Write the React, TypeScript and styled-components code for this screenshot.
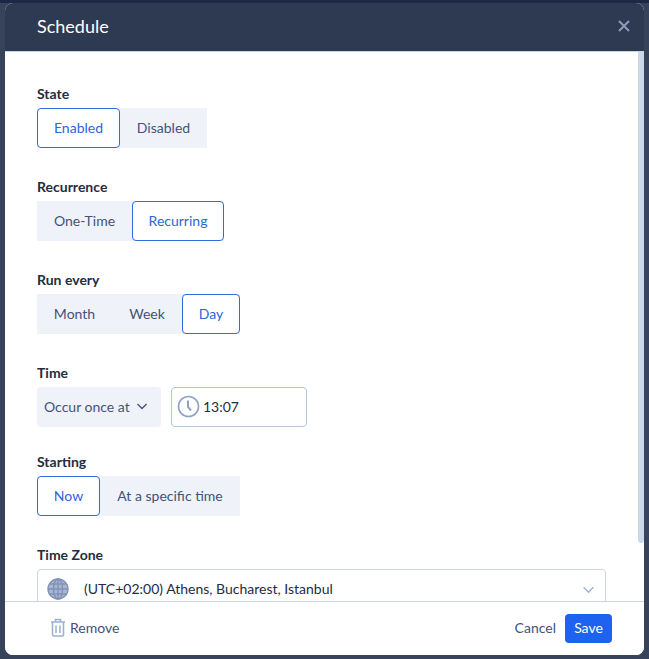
import styled, { createGlobalStyle } from "styled-components";

const GlobalStyle = createGlobalStyle`
  html, body {
    margin: 0;
    padding: 0;
    height: 100%;
    overflow: hidden;
    background: #37435b;
    font-family: "Lato", "Liberation Sans", sans-serif;
  }
`;

const Backdrop = styled.div`
  width: 649px;
  height: 659px;
  padding: 3px 5px 4px;
  box-sizing: border-box;
  background: linear-gradient(#1c2845 0, #1c2845 3px, #37435b 3px);
`;

const Dialog = styled.div`
  display: flex;
  flex-direction: column;
  height: 652px;
  border-radius: 8px;
  overflow: hidden;
  background: #fff;
`;

const Header = styled.header`
  flex: none;
  height: 49px;
  display: flex;
  align-items: center;
  justify-content: space-between;
  padding: 0 13px 2px 32px;
  box-sizing: border-box;
  background: #2d3a52;
  border-bottom: 1px solid #c9d6ea;
`;

const Title = styled.h1`
  margin: 0;
  font-size: 18px;
  font-weight: 400;
  color: #fff;
`;

const CloseButton = styled.button`
  display: flex;
  padding: 0;
  border: 0;
  background: none;
`;

const Body = styled.div`
  position: relative;
  flex: 1;
  min-height: 0;
  overflow: hidden;
  padding: 32px 32px 0;
`;

const ScrollThumb = styled.div`
  position: absolute;
  top: 0;
  right: 0;
  width: 6px;
  height: 491px;
  border-radius: 0 0 3px 3px;
  background: #ccd8ea;
`;

const Field = styled.div<{ $gap?: number }>`
  margin-bottom: ${(p) => p.$gap ?? 29}px;
`;

const Label = styled.div`
  height: 19px;
  margin-bottom: 5px;
  line-height: 19px;
  font-size: 14px;
  font-weight: 700;
  color: #242d40;
`;

const Segments = styled.div`
  display: inline-flex;
  vertical-align: top;
  height: 40px;
  background: #eff2f8;
`;

const Segment = styled.button<{ $active?: boolean; $width: number }>`
  width: ${(p) => p.$width}px;
  height: 40px;
  padding: 0 0 2px;
  box-sizing: border-box;
  border: 1px solid ${(p) => (p.$active ? "#2f6ade" : "transparent")};
  border-radius: ${(p) => (p.$active ? "4px" : "0")};
  background: ${(p) => (p.$active ? "#fff" : "transparent")};
  color: ${(p) => (p.$active ? "#2b66d9" : "#43527a")};
  font-family: inherit;
  font-size: 14px;
`;

const Row = styled.div`
  display: flex;
  gap: 10px;
`;

const SelectButton = styled.button`
  display: flex;
  align-items: center;
  gap: 6px;
  width: 124px;
  height: 40px;
  padding: 0 0 2px 7px;
  box-sizing: border-box;
  border: 0;
  border-radius: 4px;
  background: #eff2f8;
  color: #43527a;
  font-family: inherit;
  font-size: 14px;
`;

const TimeInput = styled.div`
  display: flex;
  align-items: center;
  gap: 3px;
  width: 136px;
  height: 40px;
  padding: 0 0 2px 5px;
  box-sizing: border-box;
  border: 1px solid #b6c4de;
  border-radius: 4px;
  color: #242d40;
  font-size: 14px;
`;

const ZoneSelect = styled.div`
  display: flex;
  align-items: center;
  width: 569px;
  height: 40px;
  padding: 0 10px 0 9px;
  box-sizing: border-box;
  border: 1px solid #c9d6ea;
  border-radius: 4px;
  color: #242d40;
  font-size: 14px;
`;

const ZoneText = styled.span`
  flex: 1;
  margin-left: 15px;
  padding-bottom: 2px;
`;

const Footer = styled.footer`
  flex: none;
  height: 54px;
  display: flex;
  align-items: center;
  justify-content: space-between;
  padding: 0 32px 0 45px;
  box-sizing: border-box;
  background: #fff;
  border-top: 1px solid #c9d6ea;
`;

const RemoveButton = styled.button`
  display: flex;
  align-items: center;
  gap: 4px;
  padding: 0 0 2px;
  border: 0;
  background: none;
  color: #43527a;
  font-family: inherit;
  font-size: 14px;
`;

const Actions = styled.div`
  display: flex;
  align-items: center;
  gap: 9px;
`;

const CancelButton = styled.button`
  padding: 0 0 2px;
  border: 0;
  background: none;
  color: #43527a;
  font-family: inherit;
  font-size: 14px;
`;

const SaveButton = styled.button`
  width: 47px;
  height: 29px;
  padding: 0 0 2px;
  border: 0;
  border-radius: 4px;
  background: #1e62f0;
  color: #fff;
  font-family: inherit;
  font-size: 14px;
`;

const CloseIcon = () => (
  <svg width="14" height="14" viewBox="0 0 14 14" fill="none" stroke="#8d9ab8" strokeWidth="2">
    <path d="M2 2l10 10M12 2L2 12" />
  </svg>
);

const Chevron = ({ color, size }: { color: string; size: number }) => (
  <svg width={size} height={size} viewBox="0 0 12 12" fill="none" stroke={color} strokeWidth="1.3">
    <path d="M1.5 4l4.5 4.5L10.5 4" />
  </svg>
);

const ClockIcon = () => (
  <svg width="23" height="23" viewBox="0 0 23 23" fill="none" stroke="#8fa2c6" strokeWidth="1.6">
    <circle cx="11.5" cy="11.5" r="10" />
    <path d="M11 5.5v6.5l3 3.5" strokeWidth="2" />
  </svg>
);

const GlobeIcon = () => (
  <svg width="22" height="22" viewBox="0 0 22 22" fill="none" stroke="#8192b6" strokeWidth="1.4">
    <circle cx="11" cy="11" r="10" fill="#a9b6d0" />
    <ellipse cx="11" cy="11" rx="4.5" ry="10" />
    <path d="M11 1v20M1 11h20M2.5 6h17M2.5 16h17" />
  </svg>
);

const TrashIcon = () => (
  <svg width="16" height="19" viewBox="0 0 16 19" fill="none" stroke="#9fb1d3" strokeWidth="1.6">
    <path d="M1 4h14M5.5 4V1.5h5V4M2.5 4v13a1 1 0 0 0 1 1h9a1 1 0 0 0 1-1V4M6 7.5v7.5M10 7.5v7.5" />
  </svg>
);

export default function App() {
  return (
    <>
      <GlobalStyle />
      <Backdrop>
        <Dialog>
          <Header>
            <Title>Schedule</Title>
            <CloseButton>
              <CloseIcon />
            </CloseButton>
          </Header>
          <Body>
            <ScrollThumb />
            <Field>
              <Label>State</Label>
              <Segments>
                <Segment $active $width={83}>Enabled</Segment>
                <Segment $width={87}>Disabled</Segment>
              </Segments>
            </Field>
            <Field>
              <Label>Recurrence</Label>
              <Segments>
                <Segment $width={95}>One-Time</Segment>
                <Segment $active $width={92}>Recurring</Segment>
              </Segments>
            </Field>
            <Field>
              <Label>Run every</Label>
              <Segments>
                <Segment $width={75}>Month</Segment>
                <Segment $width={70}>Week</Segment>
                <Segment $active $width={58}>Day</Segment>
              </Segments>
            </Field>
            <Field $gap={25}>
              <Label>Time</Label>
              <Row>
                <SelectButton>
                  Occur once at
                  <Chevron color="#43527a" size={12} />
                </SelectButton>
                <TimeInput>
                  <ClockIcon />
                  13:07
                </TimeInput>
              </Row>
            </Field>
            <Field>
              <Label>Starting</Label>
              <Segments>
                <Segment $active $width={63}>Now</Segment>
                <Segment $width={140}>At a specific time</Segment>
              </Segments>
            </Field>
            <Field>
              <Label>Time Zone</Label>
              <ZoneSelect>
                <GlobeIcon />
                <ZoneText>(UTC+02:00) Athens, Bucharest, Istanbul</ZoneText>
                <Chevron color="#9fb1d3" size={13} />
              </ZoneSelect>
            </Field>
          </Body>
          <Footer>
            <RemoveButton>
              <TrashIcon />
              Remove
            </RemoveButton>
            <Actions>
              <CancelButton>Cancel</CancelButton>
              <SaveButton>Save</SaveButton>
            </Actions>
          </Footer>
        </Dialog>
      </Backdrop>
    </>
  );
}
